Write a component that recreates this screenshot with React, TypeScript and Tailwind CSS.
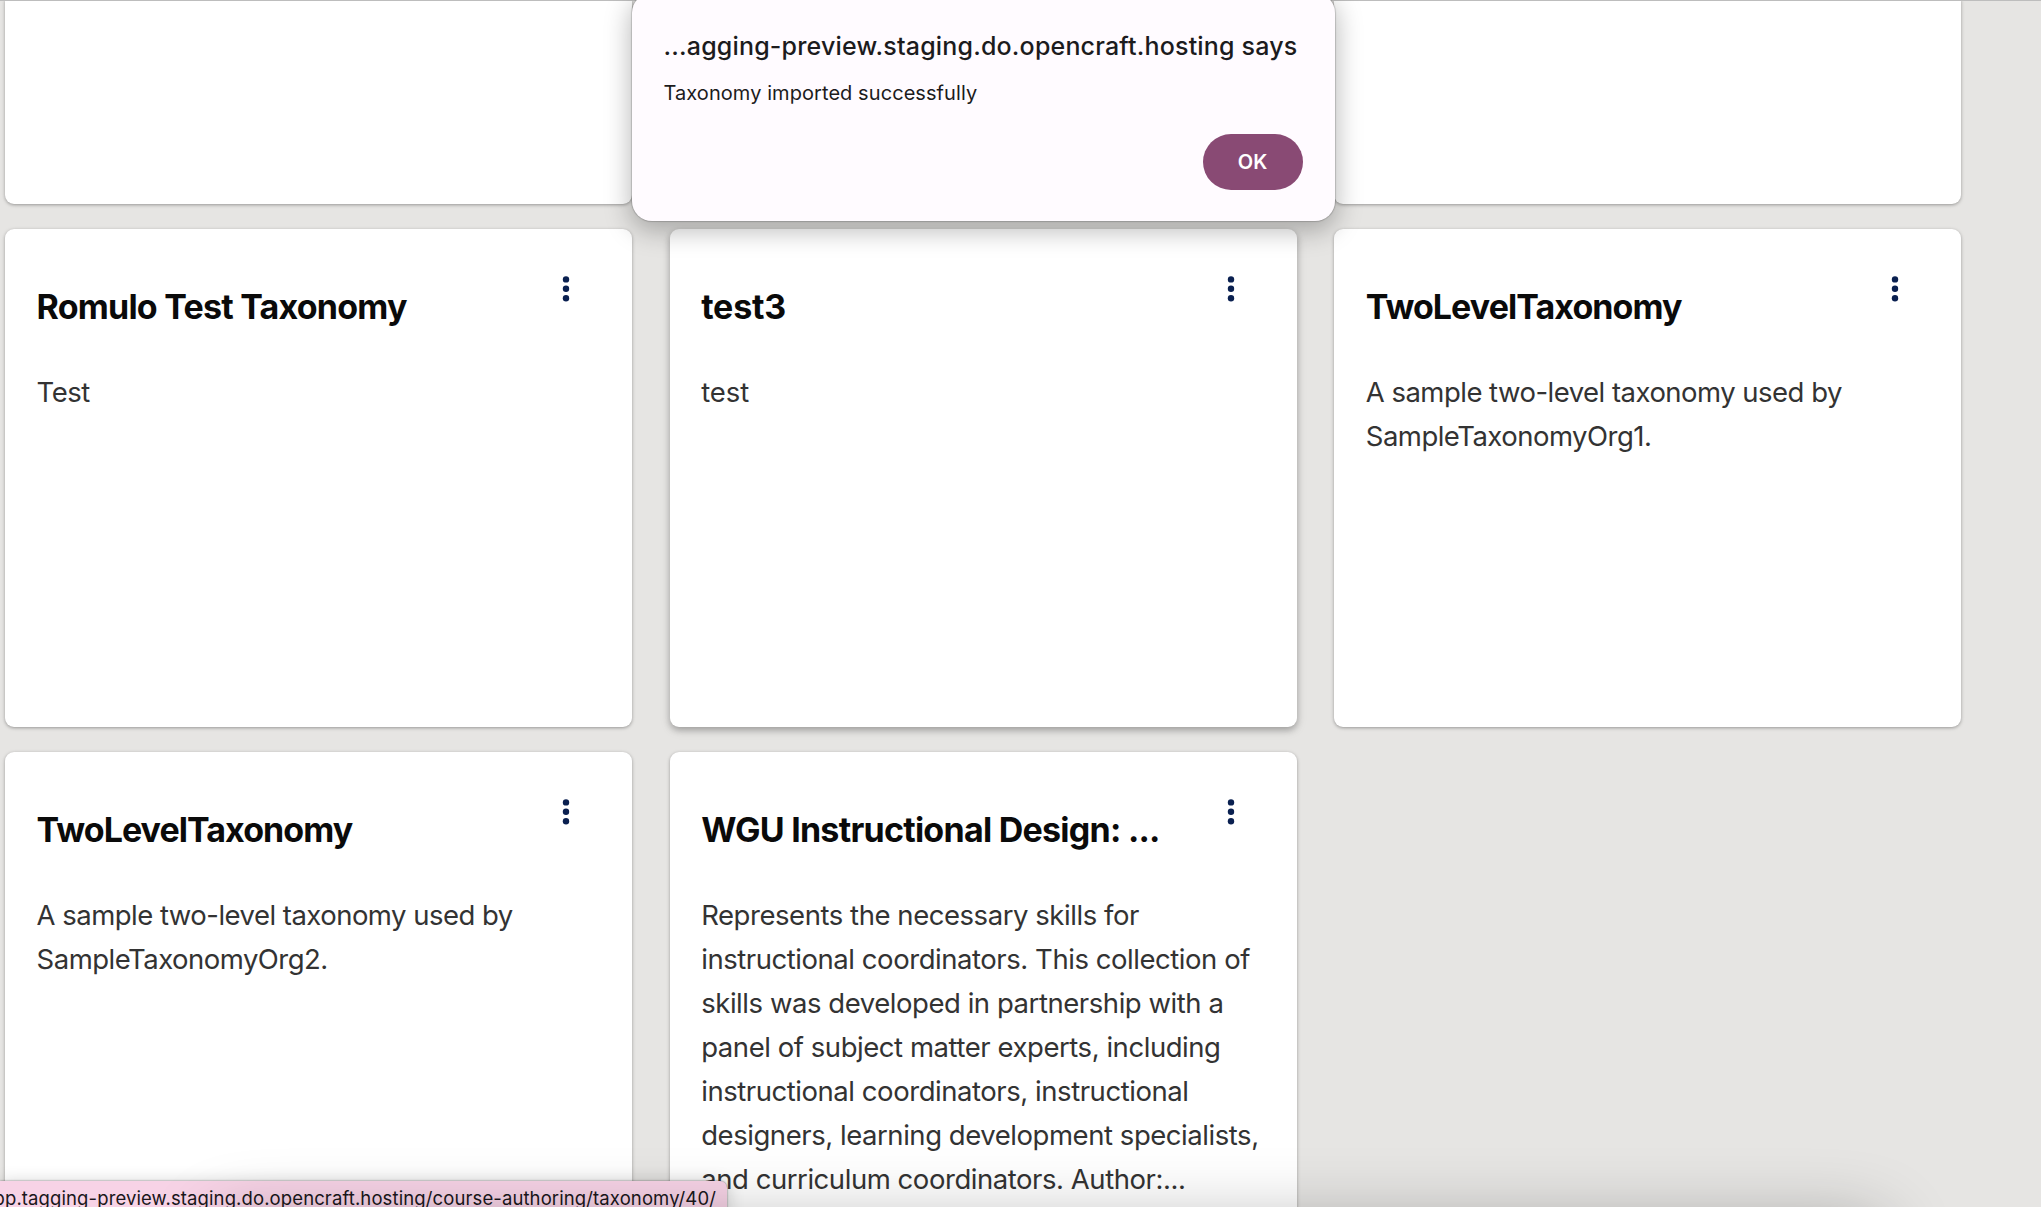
import type { ReactNode } from "react";

const sansStack = "font-['Inter','Liberation_Sans',sans-serif]";

type CardProps = {
  title: string;
  titleTracking?: string;
  lines: string[];
  bodyTracking?: string;
  raised?: boolean;
};

const cardShadow = "shadow-[0_1px_3px_rgba(0,0,0,0.26),0_1px_5px_rgba(0,0,0,0.1)]";
const raisedShadow = "shadow-[0_3px_6px_rgba(0,0,0,0.25),0_3px_12px_rgba(0,0,0,0.1)]";

function MenuDots() {
  return (
    <svg viewBox="0 0 8 28" className="mr-[62px] mt-px h-7 w-2 shrink-0 fill-[#0a2050]">
      <circle cx="4" cy="4.4" r="3.2" />
      <circle cx="4" cy="13.8" r="3.2" />
      <circle cx="4" cy="23.2" r="3.2" />
    </svg>
  );
}

function TaxonomyCard({ title, titleTracking = "tracking-[-0.78px]", lines, bodyTracking = "tracking-[-0.52px]", raised }: CardProps) {
  return (
    <article className={`overflow-hidden rounded-[9px] bg-white ${raised ? raisedShadow : cardShadow}`}>
      <header className="flex items-start justify-between pt-[45px] pl-[31.6px]">
        <h2 className={`mt-[11.3px] text-[34px] leading-[44px] font-bold whitespace-nowrap text-[#0a0a0a] ${titleTracking}`}>{title}</h2>
        <MenuDots />
      </header>
      <p className={`mt-[42.2px] pl-[31.6px] text-[27.5px] leading-[43.95px] whitespace-nowrap text-[#333333] ${bodyTracking}`}>
        {lines.map((line) => (
          <span key={line} className="block">{line}</span>
        ))}
      </p>
    </article>
  );
}

function CutCard(): ReactNode {
  return <div className={`rounded-b-[9px] bg-white ${cardShadow}`} />;
}

function AlertDialog() {
  return (
    <div
      role="alertdialog"
      className="absolute -top-[7px] left-[632px] flex h-[228px] w-[703px] flex-col rounded-[20px] bg-[#fffbff] pt-[36px] pr-[32.5px] pl-[31.5px] shadow-[0_0_1px_1px_rgba(0,0,0,0.17),0_8px_26px_2px_rgba(0,0,0,0.27)]"
    >
      <h1 className="text-[25px] leading-[34px] font-medium tracking-[0.18px] whitespace-nowrap text-[#1c1b1d]">
        ...agging-preview.staging.do.opencraft.hosting says
      </h1>
      <p className="mt-[16px] text-[20px] leading-7 tracking-[0.07px] text-[#1c1b1d]">Taxonomy imported successfully</p>
      <button className="mt-[27px] h-14 w-[100px] self-end rounded-full bg-[#894a74] text-[20px] leading-7 font-semibold text-white">OK</button>
    </div>
  );
}

function StatusBubble() {
  return (
    <div className="absolute top-[1181px] left-0 flex h-[34px] w-[727px] justify-end overflow-hidden rounded-tr-[7px] bg-[#f7d3e6] pr-[11px] shadow-[0_0_2px_rgba(0,0,0,0.55),0_2px_18px_rgba(0,0,0,0.2)]">
      <span className="mt-[4px] text-[18.5px] leading-[26px] tracking-[0.11px] whitespace-nowrap text-[#1a171b]">
        app.tagging-preview.staging.do.opencraft.hosting/course-authoring/taxonomy/40/
      </span>
    </div>
  );
}

export default function App() {
  return (
    <div className={`relative h-[1207px] w-[2041px] overflow-hidden bg-[#e6e5e3] ${sansStack}`}>
      <main className="grid grid-cols-[627px_627px_627px] grid-rows-[204px_497.7px_497.7px] gap-x-[37.6px] gap-y-[25px] pl-[5px]">
        <CutCard />
        <CutCard />
        <CutCard />
        <TaxonomyCard title="Romulo Test Taxonomy" lines={["Test"]} />
        <TaxonomyCard title="test3" titleTracking="tracking-[-0.2px]" lines={["test"]} bodyTracking="tracking-[-0.1px]" raised />
        <TaxonomyCard
          title="TwoLevelTaxonomy"
          titleTracking="tracking-[-0.94px]"
          lines={["A sample two-level taxonomy used by", "SampleTaxonomyOrg1."]}
        />
        <TaxonomyCard
          title="TwoLevelTaxonomy"
          titleTracking="tracking-[-0.94px]"
          lines={["A sample two-level taxonomy used by", "SampleTaxonomyOrg2."]}
        />
        <TaxonomyCard
          title="WGU Instructional Design: ..."
          titleTracking="tracking-[-0.74px]"
          bodyTracking="tracking-[-0.45px]"
          lines={[
            "Represents the necessary skills for",
            "instructional coordinators. This collection of",
            "skills was developed in partnership with a",
            "panel of subject matter experts, including",
            "instructional coordinators, instructional",
            "designers, learning development specialists,",
            "and curriculum coordinators. Author:...",
          ]}
        />
      </main>
      <div className="absolute inset-x-0 top-0 h-px bg-[#bdbdbd]" />
      <AlertDialog />
      <StatusBubble />
      {/* Shadow cast by the window below the viewport */}
      <div className="absolute top-[1222px] left-[215px] h-20 w-[1670px] rounded-[20px] shadow-[0_0_70px_rgba(0,0,0,0.3)]" />
    </div>
  );
}
